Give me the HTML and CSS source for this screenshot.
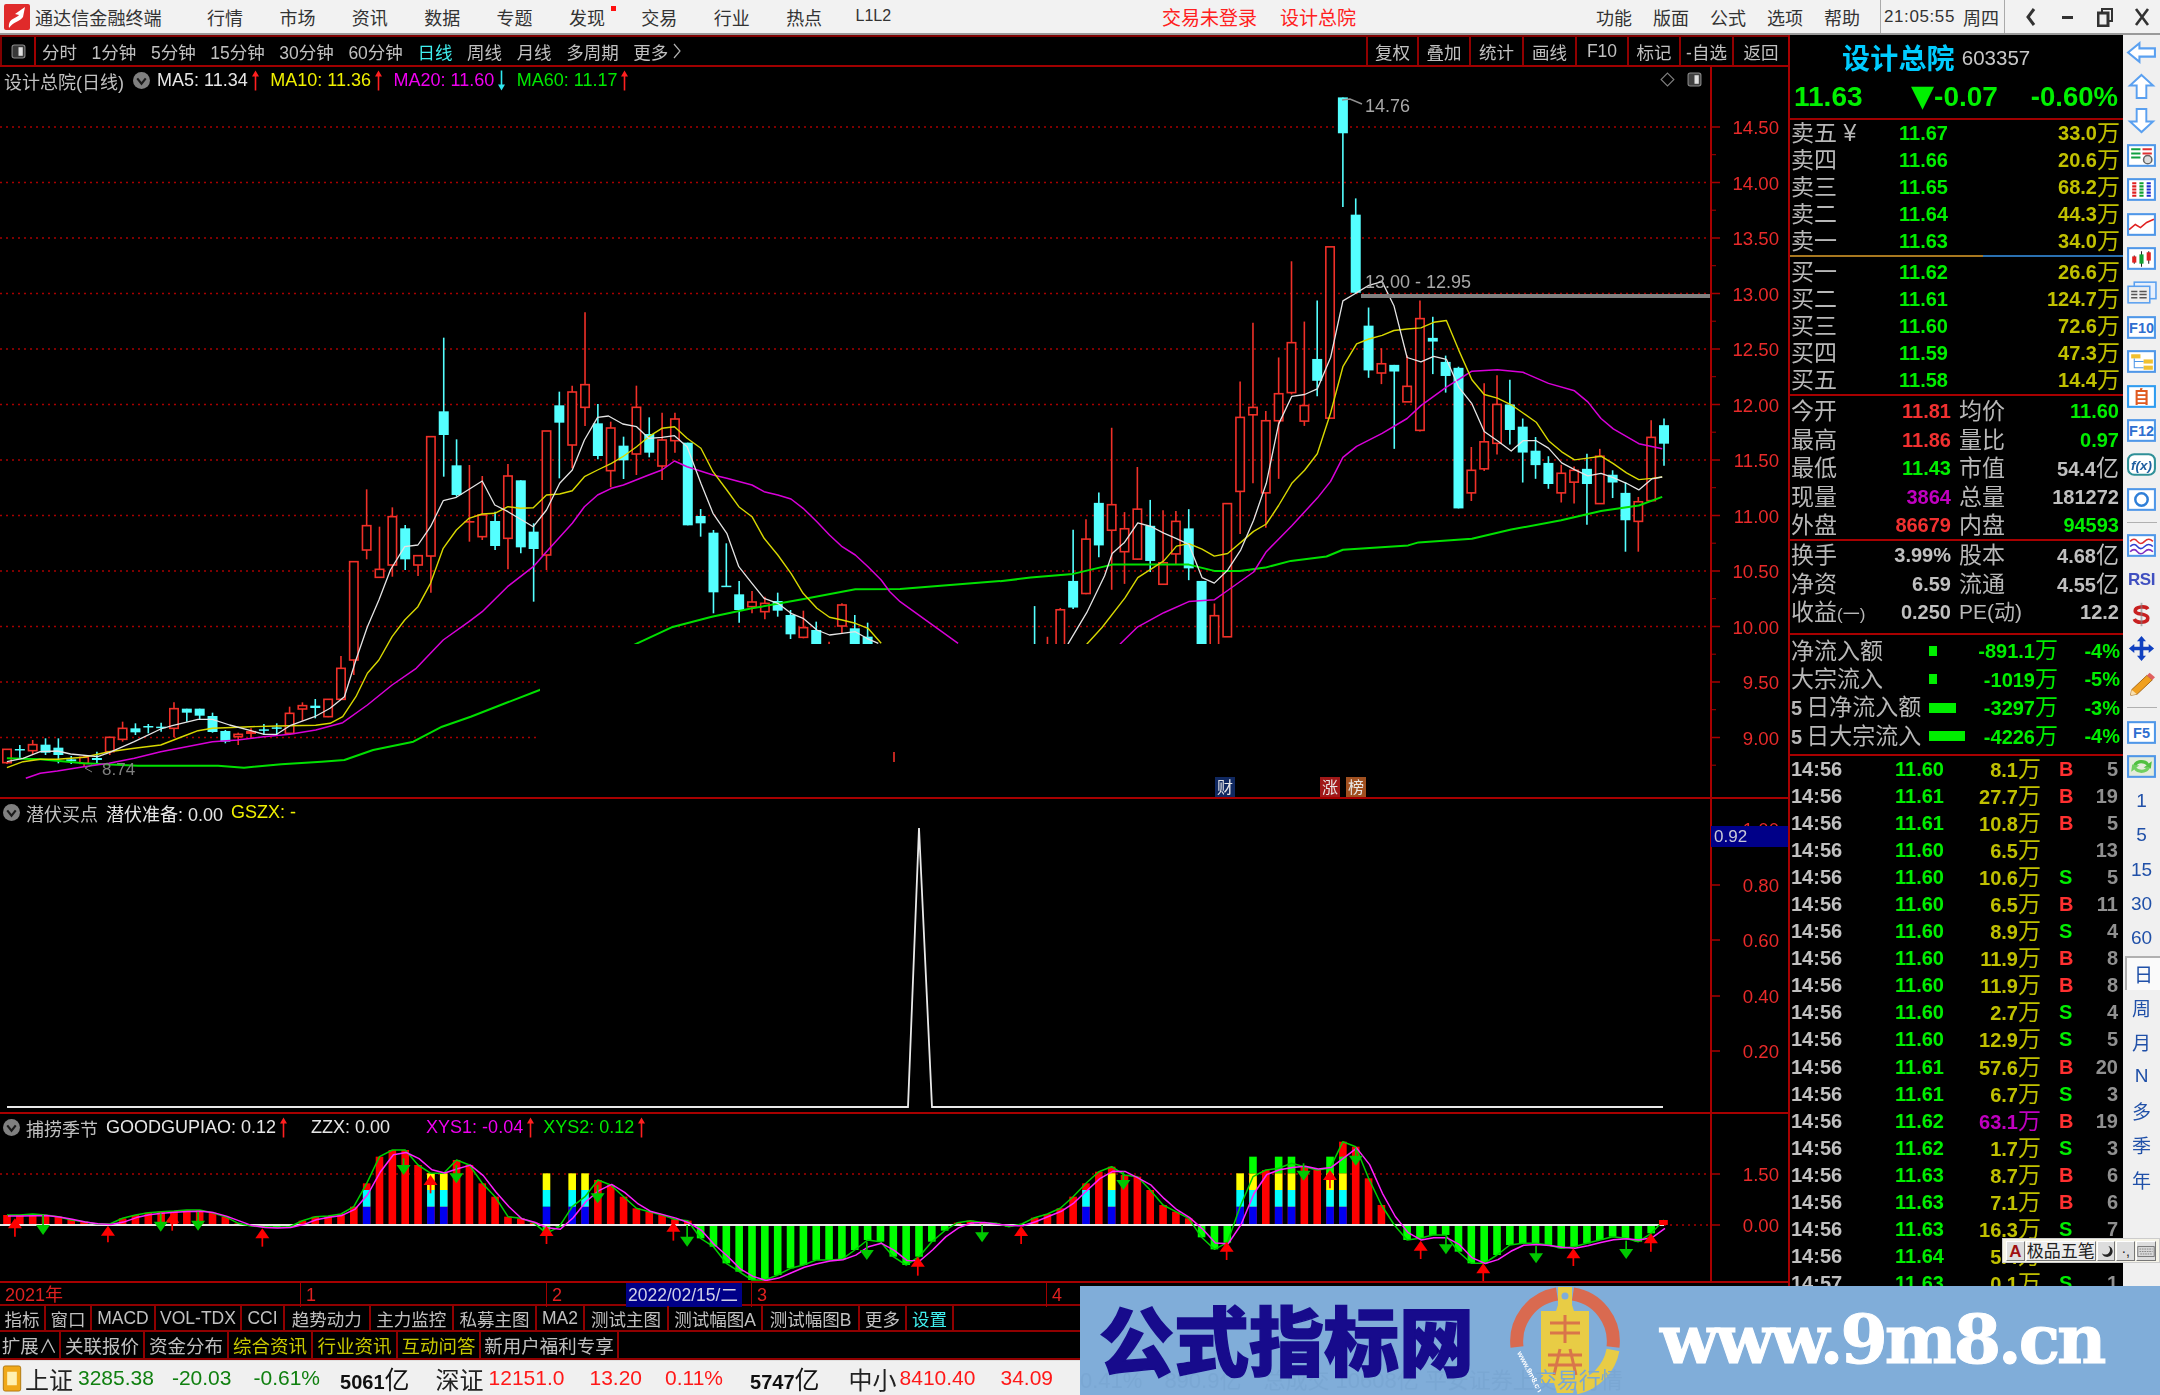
FILE: index.html
```html
<!DOCTYPE html>
<html lang="zh-CN">
<head>
<meta charset="utf-8">
<title>通达信金融终端</title>
<link rel="stylesheet" href="styles.css">
</head>
<body>
<svg class="defs" width="0" height="0" aria-hidden="true">
  <symbol id="ar-up" viewBox="0 0 9 20"><path d="M4.5 0 L8 6 H5.3 V20 H3.7 V6 H1 Z" fill="#ff2020"/></symbol>
  <symbol id="ar-down" viewBox="0 0 9 20"><path d="M3.7 0 H5.3 V14 H8 L4.5 20 L1 14 H3.7 Z" fill="#30e8f0"/></symbol>
  <symbol id="chev" viewBox="0 0 16 16"><circle cx="8" cy="8" r="8" fill="#808080"/><path d="M4 6 L8 11 L12 6" fill="none" stroke="#1a1a1a" stroke-width="2"/></symbol>
</svg>
<div class="app">
  <header class="titlebar">
    <svg class="logo" viewBox="0 0 26 26"><rect width="26" height="26" rx="2" fill="#e02a2a"/><path d="M5 24 C4 14 12 15 15 11 L11 10 L21 3 L19 13 C16 18 10 17 5 24Z" fill="#fff"/></svg>
    <span class="appname">通达信金融终端</span>
    <nav class="menu">
      <span>行情</span><span>市场</span><span>资讯</span><span>数据</span><span>专题</span><span class="dot">发现</span><span>交易</span><span>行业</span><span>热点</span><span class="lvl">L1L2</span>
    </nav>
    <span class="login">交易未登录</span><span class="stockname">设计总院</span>
    <nav class="menu2"><span>功能</span><span>版面</span><span>公式</span><span>选项</span><span>帮助</span></nav>
    <div class="clock"><span class="time">21:05:55</span><span>周四</span></div>
    <div class="winctl">
      <svg viewBox="0 0 14 20"><path d="M10 2 L4 10 L10 18" fill="none" stroke="#333" stroke-width="3"/></svg>
      <svg viewBox="0 0 14 20"><rect x="1" y="9" width="11" height="3" fill="#333"/></svg>
      <svg viewBox="0 0 16 20"><rect x="5" y="2" width="10" height="12" fill="none" stroke="#333" stroke-width="2"/><rect x="1" y="6" width="10" height="13" fill="#f0f0f0" stroke="#333" stroke-width="3"/></svg>
      <svg viewBox="0 0 16 20"><path d="M2 2 L14 18 M14 2 L2 18" stroke="#333" stroke-width="2.6"/></svg>
    </div>
  </header>

  <div class="main">
    <section class="left">
      <div class="toolbar">
        <div class="panelbtn"><svg viewBox="0 0 14 14"><rect x="1" y="1" width="12" height="12" rx="2" fill="#383838" stroke="#8a8a8a"/><rect x="7" y="3" width="4" height="8" fill="#e0e0e0"/></svg></div>
        <div class="periods">
          <span>分时</span><span>1分钟</span><span>5分钟</span><span>15分钟</span><span>30分钟</span><span>60分钟</span><span class="on">日线</span><span>周线</span><span>月线</span><span>多周期</span><span class="more">更多<svg viewBox="0 0 8 16"><path d="M1 1 L7 8 L1 15" fill="none" stroke="#b0b0b0" stroke-width="1.2"/></svg></span>
        </div>
        <div class="actions"><span>复权</span><span>叠加</span><span>统计</span><span>画线</span><span>F10</span><span>标记</span><span>-自选</span><span>返回</span></div>
      </div>

      <div class="chartbox">
        <svg id="plot" class="plot" viewBox="0 67 1788 1216"></svg>
        <div class="pane pane1">
          <div class="legend">
            <span class="lname">设计总院(日线)</span>
            <svg class="chev"><use href="#chev"/></svg>
            <span class="w mleft">MA5: 11.34</span><svg class="ar"><use href="#ar-up"/></svg>
            <span class="y mleft">MA10: 11.36</span><svg class="ar"><use href="#ar-up"/></svg>
            <span class="m mleft">MA20: 11.60</span><svg class="ar"><use href="#ar-down"/></svg>
            <span class="g mleft">MA60: 11.17</span><svg class="ar"><use href="#ar-up"/></svg>
          </div>
          <div class="cornericons">
            <svg viewBox="0 0 14 14"><path d="M7 1 L13 7 L7 13 L1 7Z" fill="none" stroke="#808080"/></svg>
            <svg viewBox="0 0 14 14"><rect x="1" y="1" width="12" height="12" rx="2" fill="#404040" stroke="#8a8a8a"/><rect x="7" y="3" width="4" height="8" fill="#e0e0e0"/></svg>
          </div>
        </div>
        <div class="pane pane2">
          <div class="legend">
            <svg class="chev first"><use href="#chev"/></svg>
            <span class="lname">潜伏买点</span>
            <span class="w mleft2">潜伏准备: 0.00</span>
            <span class="y mleft2">GSZX: -</span>
          </div>
        </div>
        <div class="pane pane3">
          <div class="legend">
            <svg class="chev first"><use href="#chev"/></svg>
            <span class="lname">捕捞季节</span>
            <span class="w mleft2">GOODGUPIAO: 0.12</span><svg class="ar"><use href="#ar-up"/></svg>
            <span class="w gapz">ZZX: 0.00</span>
            <span class="m gapy">XYS1: -0.04</span><svg class="ar"><use href="#ar-up"/></svg>
            <span class="g gapx">XYS2: 0.12</span><svg class="ar"><use href="#ar-up"/></svg>
          </div>
        </div>
      </div>

      <div class="timeaxis">
        <span>2021年</span><span>1</span><span>2</span><span class="cursor">2022/02/15/二</span><span class="after">3</span><span>4</span>
      </div>
      <div class="tabs tabs1">
        <span>指标</span><span>窗口</span><span>MACD</span><span>VOL-TDX</span><span>CCI</span><span>趋势动力</span><span>主力监控</span><span>私募主图</span><span>MA2</span><span>测试主图</span><span>测试幅图A</span><span>测试幅图B</span><span>更多</span><span class="cy">设置</span>
      </div>
      <div class="tabs tabs2">
        <span>扩展∧</span><span>关联报价</span><span>资金分布</span><span class="yl">综合资讯</span><span class="yl">行业资讯</span><span class="yl">互动问答</span><span>新用户福利专享</span>
      </div>
    </section>

    <aside class="panel">
      <div class="p-head"><span class="p-name">设计总院</span><span class="p-code">603357</span></div>
      <div class="p-price"><span>11.63</span><span><span class="tri">▼</span>-0.07</span><span class="p-pct">-0.60%</span></div>

      <div class="depth">
        <div class="d"><span class="l">卖五 ¥</span><b>11.67</b><b class="v">33.0<i>万</i></b></div>
        <div class="d"><span class="l">卖四</span><b>11.66</b><b class="v">20.6<i>万</i></b></div>
        <div class="d"><span class="l">卖三</span><b>11.65</b><b class="v">68.2<i>万</i></b></div>
        <div class="d"><span class="l">卖二</span><b>11.64</b><b class="v">44.3<i>万</i></b></div>
        <div class="d"><span class="l">卖一</span><b>11.63</b><b class="v">34.0<i>万</i></b></div>
      </div>
      <div class="midline"></div>
      <div class="depth bid">
        <div class="d"><span class="l">买一</span><b>11.62</b><b class="v">26.6<i>万</i></b></div>
        <div class="d"><span class="l">买二</span><b>11.61</b><b class="v">124.7<i>万</i></b></div>
        <div class="d"><span class="l">买三</span><b>11.60</b><b class="v">72.6<i>万</i></b></div>
        <div class="d"><span class="l">买四</span><b>11.59</b><b class="v">47.3<i>万</i></b></div>
        <div class="d"><span class="l">买五</span><b>11.58</b><b class="v">14.4<i>万</i></b></div>
      </div>

      <div class="stats s1">
        <div class="s"><span>今开</span><b class="r">11.81</b><span>均价</span><b class="gn">11.60</b></div>
        <div class="s"><span>最高</span><b class="r">11.86</b><span>量比</span><b class="gn">0.97</b></div>
        <div class="s"><span>最低</span><b class="gn">11.43</b><span>市值</span><b>54.4<i>亿</i></b></div>
        <div class="s"><span>现量</span><b class="pu">3864</b><span>总量</span><b>181272</b></div>
        <div class="s"><span>外盘</span><b class="r">86679</b><span>内盘</span><b class="gn">94593</b></div>
      </div>
      <div class="stats s2">
        <div class="s"><span>换手</span><b>3.99%</b><span>股本</span><b>4.68<i>亿</i></b></div>
        <div class="s"><span>净资</span><b>6.59</b><span>流通</span><b>4.55<i>亿</i></b></div>
        <div class="s"><span>收益<small>(一)</small></span><b>0.250</b><span class="pe">PE(动)</span><b>12.2</b></div>
      </div>
      <div class="flows">
        <div class="f"><span>净流入额</span><em class="bar" style="width:8px"></em><b>-891.1<i>万</i></b><b>-4%</b></div>
        <div class="f"><span>大宗流入</span><em class="bar" style="width:8px"></em><b>-1019<i>万</i></b><b>-5%</b></div>
        <div class="f"><span><u>5</u>日净流入额</span><em class="bar" style="width:27px"></em><b>-3297<i>万</i></b><b>-3%</b></div>
        <div class="f"><span><u>5</u>日大宗流入</span><em class="bar" style="width:36px"></em><b>-4226<i>万</i></b><b>-4%</b></div>
      </div>

      <div class="ticks">
        <div class="t"><b>14:56</b><b class="gn">11.60</b><b class="yv">8.1<i>万</i></b><b class="rd">B</b><b class="ct">5</b></div>
        <div class="t"><b>14:56</b><b class="gn">11.61</b><b class="yv">27.7<i>万</i></b><b class="rd">B</b><b class="ct">19</b></div>
        <div class="t"><b>14:56</b><b class="gn">11.61</b><b class="yv">10.8<i>万</i></b><b class="rd">B</b><b class="ct">5</b></div>
        <div class="t"><b>14:56</b><b class="gn">11.60</b><b class="yv">6.5<i>万</i></b><b></b><b class="ct">13</b></div>
        <div class="t"><b>14:56</b><b class="gn">11.60</b><b class="yv">10.6<i>万</i></b><b class="gn">S</b><b class="ct">5</b></div>
        <div class="t"><b>14:56</b><b class="gn">11.60</b><b class="yv">6.5<i>万</i></b><b class="rd">B</b><b class="ct">11</b></div>
        <div class="t"><b>14:56</b><b class="gn">11.60</b><b class="yv">8.9<i>万</i></b><b class="gn">S</b><b class="ct">4</b></div>
        <div class="t"><b>14:56</b><b class="gn">11.60</b><b class="yv">11.9<i>万</i></b><b class="rd">B</b><b class="ct">8</b></div>
        <div class="t"><b>14:56</b><b class="gn">11.60</b><b class="yv">11.9<i>万</i></b><b class="rd">B</b><b class="ct">8</b></div>
        <div class="t"><b>14:56</b><b class="gn">11.60</b><b class="yv">2.7<i>万</i></b><b class="gn">S</b><b class="ct">4</b></div>
        <div class="t"><b>14:56</b><b class="gn">11.60</b><b class="yv">12.9<i>万</i></b><b class="gn">S</b><b class="ct">5</b></div>
        <div class="t"><b>14:56</b><b class="gn">11.61</b><b class="yv">57.6<i>万</i></b><b class="rd">B</b><b class="ct">20</b></div>
        <div class="t"><b>14:56</b><b class="gn">11.61</b><b class="yv">6.7<i>万</i></b><b class="gn">S</b><b class="ct">3</b></div>
        <div class="t"><b>14:56</b><b class="gn">11.62</b><b class="yv big">63.1<i>万</i></b><b class="rd">B</b><b class="ct">19</b></div>
        <div class="t"><b>14:56</b><b class="gn">11.62</b><b class="yv">1.7<i>万</i></b><b class="gn">S</b><b class="ct">3</b></div>
        <div class="t"><b>14:56</b><b class="gn">11.63</b><b class="yv">8.7<i>万</i></b><b class="rd">B</b><b class="ct">6</b></div>
        <div class="t"><b>14:56</b><b class="gn">11.63</b><b class="yv">7.1<i>万</i></b><b class="rd">B</b><b class="ct">6</b></div>
        <div class="t"><b>14:56</b><b class="gn">11.63</b><b class="yv">16.3<i>万</i></b><b class="gn">S</b><b class="ct">7</b></div>
        <div class="t"><b>14:56</b><b class="gn">11.64</b><b class="yv">5.4<i>万</i></b><b class="rd">B</b><b class="ct">3</b></div>
        <div class="t"><b>14:57</b><b class="gn">11.63</b><b class="yv">0.1<i>万</i></b><b class="gn">S</b><b class="ct">1</b></div>
      </div>
    </aside>

    <aside class="side">
      <div class="ic"><svg viewBox="0 0 30 24"><path d="M2 12 L13 3 V8 H28 V16 H13 V21 Z" fill="#fff" stroke="#5aa0f0" stroke-width="2"/></svg></div>
      <div class="ic"><svg viewBox="0 0 30 28"><path d="M15 2 L27 13 H20 V26 H10 V13 H3 Z" fill="#fff" stroke="#5aa0f0" stroke-width="2"/></svg></div>
      <div class="ic"><svg viewBox="0 0 30 28"><path d="M10 2 H20 V15 H27 L15 26 L3 15 H10 Z" fill="#fff" stroke="#5aa0f0" stroke-width="2"/></svg></div>
      <div class="ic"><svg viewBox="0 0 30 24"><rect x="2" y="2" width="26" height="20" fill="#fff" stroke="#4f97e8" stroke-width="2"/><path d="M5 6H14M5 10H14M5 14H14" stroke="#10a040" stroke-width="2"/><path d="M16 6H25M16 10H25" stroke="#e03030" stroke-width="2"/><circle cx="21" cy="16" r="4" fill="#ddd" stroke="#666" stroke-width="1.5"/></svg></div>
      <div class="ic"><svg viewBox="0 0 30 24"><rect x="2" y="2" width="26" height="20" fill="#fff" stroke="#4f97e8" stroke-width="2"/><path d="M8 5V19" stroke="#e02020" stroke-width="4" stroke-dasharray="2 1"/><path d="M15 5V19" stroke="#10a030" stroke-width="4" stroke-dasharray="2 1"/><path d="M22 5V19" stroke="#2030d0" stroke-width="4" stroke-dasharray="2 1"/></svg></div>
      <div class="ic"><svg viewBox="0 0 30 24"><rect x="2" y="2" width="26" height="20" fill="#fff" stroke="#4f97e8" stroke-width="2"/><path d="M3 17 L9 12 L14 15 L20 10 L27 7" fill="none" stroke="#e02020" stroke-width="1.5"/></svg></div>
      <div class="ic"><svg viewBox="0 0 30 24"><rect x="2" y="2" width="26" height="20" fill="#fff" stroke="#4f97e8" stroke-width="2"/><path d="M8 9V17M15 5V20M22 5V17" stroke="#222"/><rect x="6" y="10" width="4" height="6" fill="#e02020"/><rect x="13" y="8" width="4" height="9" fill="#10a030"/><rect x="20" y="6" width="4" height="8" fill="#e02020"/></svg></div>
      <div class="ic"><svg viewBox="0 0 30 24"><rect x="8" y="2" width="21" height="16" fill="#e8f0fc" stroke="#5aa0f0" stroke-width="1.5"/><rect x="2" y="6" width="21" height="16" fill="#eee" stroke="#5aa0f0" stroke-width="1.5"/><path d="M5 11H11M13 11H20M5 14H11M13 14H20M5 17H11M13 17H20" stroke="#555" stroke-width="1.5"/></svg></div>
      <div class="ic"><svg viewBox="0 0 30 24"><rect x="2" y="2" width="26" height="20" fill="#fff" stroke="#4f97e8" stroke-width="2"/><text x="15" y="17" class="icontext">F10</text></svg></div>
      <div class="ic"><svg viewBox="0 0 30 24"><rect x="2" y="2" width="26" height="20" fill="#fff" stroke="#4f97e8" stroke-width="2"/><rect x="5" y="5" width="9" height="4" fill="#f0c030"/><rect x="17" y="10" width="9" height="4" fill="#f0c030"/><rect x="17" y="16" width="9" height="4" fill="#f0c030"/><path d="M8 9V18H17M8 12H17" fill="none" stroke="#4f97e8"/></svg></div>
      <div class="ic"><svg viewBox="0 0 30 24"><rect x="2" y="2" width="26" height="20" fill="#fff" stroke="#2f9cf0" stroke-width="2"/><text x="15" y="18" class="icontext orange">自</text></svg></div>
      <div class="ic"><svg viewBox="0 0 30 24"><rect x="2" y="2" width="26" height="20" fill="#fff" stroke="#4f97e8" stroke-width="2"/><text x="15" y="17" class="icontext">F12</text></svg></div>
      <div class="ic"><svg viewBox="0 0 30 24"><rect x="2" y="2" width="26" height="20" rx="6" fill="#fff" stroke="#2f9098" stroke-width="2"/><text x="15" y="17" class="icontext fx">f(x)</text></svg></div>
      <div class="ic"><svg viewBox="0 0 30 24"><rect x="2" y="2" width="26" height="20" fill="#fff" stroke="#4f97e8" stroke-width="2"/><circle cx="15" cy="12" r="6" fill="none" stroke="#2f7fd8" stroke-width="2.4"/></svg></div>
      <div class="sep"></div>
      <div class="ic"><svg viewBox="0 0 30 24"><rect x="2" y="2" width="26" height="20" fill="#fff" stroke="#4f97e8" stroke-width="2"/><path d="M4 8 Q8 4 11 8 T18 8 T26 8" fill="none" stroke="#e03030" stroke-width="1.5"/><path d="M4 13 Q8 9 11 13 T18 13 T26 13" fill="none" stroke="#3040d0" stroke-width="1.5"/><path d="M4 18 Q8 14 11 18 T18 18 T26 18" fill="none" stroke="#8030c0" stroke-width="1.5"/></svg></div>
      <div class="ic txt rsi">RSI</div>
      <div class="ic"><svg viewBox="0 0 30 30"><path d="M22 9 C20 5 8 6 8 11 C8 16 22 13 22 19 C22 25 9 25 7 20" fill="none" stroke="#c82020" stroke-width="4"/><path d="M15 2V28" stroke="#808080" stroke-width="2" opacity=".6"/></svg></div>
      <div class="ic"><svg viewBox="0 0 30 30"><path d="M15 1 L20 7 H17 V13 H23 V10 L29 15 L23 20 V17 H17 V23 H20 L15 29 L10 23 H13 V17 H7 V20 L1 15 L7 10 V13 H13 V7 H10 Z" fill="#1040c0"/></svg></div>
      <div class="ic"><svg viewBox="0 0 30 30"><path d="M4 22 L21 6 L27 11 L10 27 L3 28 Z" fill="#f0a020" stroke="#a06010"/><path d="M21 6 L24 3 L30 8 L27 11Z" fill="#e06060"/><path d="M4 22 L3 28 L10 27Z" fill="#f8e0b0"/></svg></div>
      <div class="sep sep2"></div>
      <div class="ic"><svg viewBox="0 0 30 24"><rect x="2" y="2" width="26" height="20" fill="#fff" stroke="#4f97e8" stroke-width="2"/><text x="15" y="17" class="icontext">F5</text></svg></div>
      <div class="ic"><svg viewBox="0 0 30 24"><rect x="2" y="2" width="26" height="20" fill="#e4ecdc" stroke="#4f97e8" stroke-width="2"/><path d="M7 11 C8 5 19 4 22 9 L25 7 L24 14 L17 13 L20 11 C17 8 11 8 10 12Z" fill="#50c040"/><path d="M23 13 C22 19 11 20 8 15 L5 17 L6 10 L13 11 L10 13 C13 16 19 16 20 12Z" fill="#70d060"/></svg></div>
      <div class="ic txt">1</div>
      <div class="ic txt">5</div>
      <div class="ic txt">15</div>
      <div class="ic txt">30</div>
      <div class="ic txt">60</div>
      <div class="ic txt sel">日</div>
      <div class="ic txt">周</div>
      <div class="ic txt">月</div>
      <div class="ic txt">N</div>
      <div class="ic txt">多</div>
      <div class="ic txt">季</div>
      <div class="ic txt">年</div>
    </aside>
  </div>

  <footer class="status">
    <svg class="stico" viewBox="0 0 20 28"><rect x="1" y="1" width="18" height="26" rx="2" fill="#f0a818" stroke="#b07810"/><rect x="5" y="7" width="10" height="14" fill="#fff0b0"/></svg>
    <span class="sn">上证</span><span class="nv gr g5">3285.38</span><span class="nv gr g18">-20.03</span><span class="nv gr g22">-0.61%</span><span class="nv bk g20">5061<i>亿</i></span>
    <span class="sn g26">深证</span><span class="nv rd2 g5">12151.0</span><span class="nv rd2 g25">13.20</span><span class="nv rd2 g23">0.11%</span><span class="nv bk g27">5747<i>亿</i></span>
    <span class="sn g29">中小</span><span class="nv rd2 g3">8410.40</span><span class="nv rd2 g25">34.09</span>
  </footer>

  <div class="ime">
    <span class="imebtn imea">A</span><span class="imebtn imename">极品五笔</span>
    <span class="imebtn"><svg viewBox="0 0 14 14"><path d="M9 1 A6 6 0 1 1 2 9 A5 5 0 0 0 9 1Z" fill="#222"/></svg></span>
    <span class="imebtn">·,</span>
    <span class="imebtn imekb"><svg viewBox="0 0 22 14"><rect x="1" y="1" width="20" height="12" fill="#d8d8d8" stroke="#666"/><path d="M3 4H19M3 7H19M4 10H18" stroke="#777" stroke-dasharray="2 1"/></svg></span>
  </div>

  <div class="strip">
    <span class="faint f1">0.41%　890.9亿　总成交 10608亿 平安证券上交易行情</span>
    <span class="cnmark">公式指标网</span>
    <svg class="mark" viewBox="0 0 110 108">
      <path d="M7 60 A48 48 0 0 1 47 7" fill="none" stroke="#d96a50" stroke-width="13"/>
      <path d="M63 7 A48 48 0 0 1 103 60" fill="none" stroke="#d96a50" stroke-width="13"/>
      <path d="M103 63 A48 48 0 0 1 66 101" fill="none" stroke="#e8cc45" stroke-width="13"/>
      <path d="M48 0 H62 V18 L64 24 H79 V96 H66 L63 106 H47 L44 96 H31 V24 H46 L48 18Z" fill="#e8cc45"/>
      <circle cx="55" cy="9" r="3.5" fill="#7fadd9"/>
      <path d="M40 36 H70 M40 46 H70 M55 28 V56 M38 68 H72 M38 78 H72 M50 62 L44 88 M60 62 L66 88" fill="none" stroke="#d9754a" stroke-width="3"/>
      <text class="marktxt" transform="translate(7 66) rotate(62)">www.9m8.cn</text>
    </svg>
    <span class="urlmark">www.9m8.cn</span>
  </div>
</div>
<script src="chart.js"></script>
</body>
</html>
```
FILE: styles.css
```css
*{box-sizing:border-box}
html,body{margin:0;padding:0;background:#000}
body{width:2160px;height:1395px;overflow:hidden;font-family:"Liberation Sans","Noto Sans CJK SC",sans-serif;color:#c0c0c0}
.defs{position:absolute}
i{font-style:normal}
.app{position:relative;width:2160px;height:1395px;display:flex;flex-direction:column;filter:blur(.4px)}

/* title bar */
.titlebar{height:35px;background:#f2f2f2;border-bottom:2px solid #9a9a9a;display:flex;align-items:center;color:#333;font-size:18px;flex:none}
.logo{width:26px;height:26px;margin-left:4px}
.appname{margin-left:5px;width:127px;white-space:nowrap;font-size:18.1px}
.menu{display:flex;margin-left:45px;gap:36.4px;width:685px}
.menu span{white-space:nowrap}
.dot{position:relative}
.dot::after{content:"";position:absolute;left:42px;top:2px;width:5px;height:5px;background:#ff1010}
.lvl{font-size:16px;line-height:24px;margin-left:-3px}
.login{margin-left:270px;color:#ff2020;width:97px;white-space:nowrap;font-size:19px}
.stockname{margin-left:21px;color:#ff2020;width:77px;white-space:nowrap;font-size:19px}
.menu2{display:flex;gap:21px;margin-left:239px}
.clock{display:flex;gap:8px;align-items:center;margin-left:20px;padding:0 5px 0 3px;height:33px;border-left:1px solid #aaa;border-right:1px solid #aaa;font-size:18px;white-space:nowrap}
.time{font-size:17px;letter-spacing:.6px}
.winctl{display:flex;gap:21px;margin-left:18px;align-items:center}
.winctl svg{width:16px;height:20px}

/* main */
.main{display:flex;height:1325px;flex:none}
.left{width:1788px;flex:none;display:flex;flex-direction:column}
.toolbar{height:32px;border-top:2px solid #800000;border-bottom:2px solid #a00000;display:flex;align-items:stretch;font-size:17.5px;flex:none}
.panelbtn{width:36px;border-left:2px solid #800000;border-right:2px solid #a00000;display:flex;align-items:center;justify-content:center}
.panelbtn svg{width:15px;height:15px}
.periods{display:flex;gap:14.6px;padding-left:6px;align-items:center;white-space:nowrap}
.more{display:flex;align-items:center;gap:5px}
.more svg{width:8px;height:16px}
.on{color:#40f0f0}
.actions{margin-left:auto;display:grid;grid-template-columns:51px 52px 53px 53px 52px 52px 53px 56px;width:422px}
.actions span{border-left:2px solid #900000;display:flex;align-items:center;justify-content:center;white-space:nowrap}

.chartbox{position:relative;height:1216px;flex:none;display:flex;flex-direction:column}
.plot{position:absolute;left:0;top:0;width:1788px;height:1216px}
.pane{position:relative;border-bottom:2px solid #a80000;flex:none}
.pane1{height:732px}
.pane2{height:315px}
.pane3{height:169px}
.legend{display:flex;align-items:center;height:24px;padding:3px 0 0 4px;font-size:18px;white-space:nowrap;position:relative}
.lname{color:#c0c0c0}
.pane2 .legend,.pane3 .legend{padding-left:3px}
.chev{width:17px;height:17px;margin-left:9px}
.chev.first{margin-left:0;margin-right:6px}
.ar{width:9px;height:21px;margin-left:3px}
.mleft{margin-left:10.5px}
.chev + .mleft{margin-left:7px}
.mleft2{margin-left:8px}
.gapz{margin-left:23px}
.gapy{margin-left:36px}
.gapx{margin-left:8px}
.w{color:#e6e6e6}
.y{color:#f0f000}
.m{color:#f000f0}
.g{color:#00e800}
.cornericons{position:absolute;left:1660px;top:5px;display:flex;gap:12px}
.cornericons svg{width:15px;height:15px}

.timeaxis{height:23px;display:grid;grid-template-columns:300px 246px 80px 116px 9px 295px 1fr;font-size:18px;color:#e02020;border-bottom:2px solid #900000;flex:none;white-space:nowrap}
.timeaxis span{padding-left:5px;border-left:1px solid #a00000;line-height:24px}
.timeaxis span:first-child{border-left:0}
.timeaxis .cursor{background:#000088;color:#d0d0e8;padding-left:2px;border:0;font-size:17.5px}
.timeaxis .after{grid-column:6}
.tabs{display:grid;font-size:17.5px;flex:none;white-space:nowrap;align-items:stretch}
.tabs span{display:flex;align-items:center;justify-content:center;border-right:2px solid #900000}
.tabs1{height:26px;grid-template-columns:46px 46px 64px 86px 43px 85.5px 83.5px 83px 48px 84px 94px 97px 47px 47px;border-bottom:2px solid #900000}
.tabs2{height:28px;grid-template-columns:61px 84px 84px 84px 85px 83px 138px;border-bottom:2px solid #900000;font-size:18.5px}
.cy{color:#40f0f0}
.yl{color:#c8c800}

/* right panel */
.panel{width:335px;flex:none;border-left:2px solid #a80000;overflow:hidden;font-size:23px;position:relative}
.panel b{font-weight:700;font-size:20px}
.p-head{height:40px;padding:3px 0 0 52px;display:flex;align-items:center;gap:7px;white-space:nowrap}
.p-name{color:#00ccff;font-size:28px;font-weight:700;letter-spacing:.2px}
.p-code{font-size:20.5px;color:#c8c8c8;margin-top:3px}
.p-price{height:45px;border-bottom:2px solid #a00000;display:grid;grid-template-columns:117px 112px 1fr;align-items:center;padding:0 5px 0 4px;color:#00f000;font-size:28px;font-weight:700;white-space:nowrap}
.p-pct{text-align:right;font-size:27.5px}
.tri{font-family:"DejaVu Sans",sans-serif;font-size:30px;line-height:1}
.depth{height:135px}
.d{display:grid;grid-template-columns:108px 60px 1fr;height:27px;line-height:27px;padding:0 3px 0 1px;color:#b8b8b8}
.d .l{white-space:nowrap}
.d b{color:#00ee00}
.d b.v{color:#c0c000;text-align:right;display:flex;justify-content:flex-end;align-items:center}
.d i,.yv i{font-size:23px;font-weight:400}
.midline{height:2px;background:linear-gradient(90deg,#a87820 0 193px,#2a70b0 193px)}
.depth.bid{height:139px;padding-top:2px;border-bottom:2px solid #a80000}
.stats{border-bottom:2px solid #a80000}
.stats.s1{padding-top:1px;height:145px}
.stats.s2{height:94px}
.s{display:grid;grid-template-columns:100px 60px 8px 82px 78px;height:28.5px;line-height:28.5px;padding-left:1px;color:#b8b8b8;white-space:nowrap}
.s > b{text-align:right;color:#c0c0c0}
.s > span:nth-of-type(2){grid-column:4}
.s i{font-size:23px;font-weight:400}
.s small{font-size:17px}
.s .pe{font-size:21px}
.s b.r{color:#f03030}
.s b.gn{color:#00ee00}
.s b.pu{color:#c000c0}
.flows{height:121px;border-bottom:2px solid #a80000;padding:1px 3px 0 1px}
.f{display:grid;grid-template-columns:138px 36px 1fr 62px;height:28.5px;line-height:28.5px;align-items:center;white-space:nowrap;color:#b8b8b8}
.f u{text-decoration:none;font-weight:700;font-size:20px;margin-right:4px}
.f em{display:block;height:10px;background:#00ee00}
.f > b{text-align:right;color:#00ee00}
.f i{font-size:23px;font-weight:400}
.t{display:grid;grid-template-columns:104px 52px 94px 18px 59px;height:27.05px;line-height:27.05px;padding-left:1px;white-space:nowrap;color:#c0c0c0}
.t b{font-size:20px}
.t b.gn{color:#00ee00}
.t .yv{color:#c0c000;text-align:right}
.t .big{color:#c000c0}
.t .rd{color:#ff3030;padding-left:18px;margin-right:-18px}
.t b.gn:nth-child(4){padding-left:18px;margin-right:-18px}
.t .ct{text-align:right;color:#909090}

/* right icon strip */
.side{width:37px;flex:none;background:#f0f0f0;color:#2050a8}
.ic{height:34.4px;display:flex;align-items:center;justify-content:center}
.ic svg{width:31px;height:27px}
.sep{height:12px;display:flex;align-items:center}
.sep2{height:14.5px}
.sep::after{content:"";display:block;width:30px;margin:0 auto;height:1px;background:#b0b0b0}
.txt{font-size:19px;font-family:"Liberation Sans","Noto Sans CJK SC",sans-serif}
.rsi{color:#4050c0;font-weight:700;font-size:17px;letter-spacing:-.5px}
.sel{background:#fafafa;border-left:2px solid #b0b0b0;border-top:2px solid #b0b0b0;margin-left:2px}
.icontext{font:700 14px "Liberation Sans",sans-serif;fill:#2f6fd0;text-anchor:middle}
.icontext.orange{font:700 16px "Noto Sans CJK SC",sans-serif;fill:#e05a20}
.icontext.fx{fill:#205fa0;font-size:13px;font-style:italic}

/* status bar */
.status{height:35px;flex:none;background:#f0f0f0;display:flex;align-items:center;color:#222;white-space:nowrap;border-top:1px solid #e0e0e0}
.stico{width:20px;height:27px;margin-left:2px}
.sn{font-size:24px;margin-left:3px}
.nv{font-size:21px}
.nv i{font-size:25px;font-weight:400}
.gr{color:#108010}
.rd2{color:#ff1818}
.bk{color:#101010;font-weight:700;font-size:20px}
.g3{margin-left:3px}.g5{margin-left:5px}.g18{margin-left:18px}.g20{margin-left:20px}.g22{margin-left:22px}.g23{margin-left:23px}.g25{margin-left:25px}.g26{margin-left:26px}.g27{margin-left:27px}.g29{margin-left:29px}

/* floating input-method toolbar */
.ime{position:absolute;left:2002px;top:1238px;width:158px;height:25px;background:#f6f4e8;border:1px solid #ccc;display:flex;padding:2px 3px;gap:1px;color:#222}
.imebtn{background:#ddd;border:1px solid #777;border-top-color:#fff;border-left-color:#fff;height:20px;width:20px;display:flex;align-items:center;justify-content:center;font-size:14px;line-height:1}
.imebtn svg{width:13px;height:13px}
.imea{color:#a01010;font-weight:700;font-size:17px}
.imename{width:70px;font-size:17px;background:#ececec;white-space:nowrap}
.imebtn.imekb svg{width:18px;height:13px}

/* watermark strip */
.strip{position:absolute;left:1080px;top:1286px;width:1080px;height:109px;background:#80add9;display:flex;align-items:center;overflow:hidden}
.cnmark{margin-left:19px;width:380px;font:900 75px/1 "Noto Sans CJK SC",sans-serif;color:#170b8c;white-space:nowrap;position:relative;top:-3px;-webkit-text-stroke:1.5px #170b8c}
.mark{width:110px;height:108px;margin-left:31px;flex:none}
.marktxt{font:700 7.5px "Liberation Sans",sans-serif;fill:#fff}
.urlmark{margin-left:40px;font:700 68px/1 "DejaVu Serif",serif;color:#fff;letter-spacing:-3px;white-space:nowrap;position:relative;top:-2px;-webkit-text-stroke:1px #fff}
.faint{position:absolute;color:#7aa7d3;font-size:22px;white-space:nowrap}
.f1{left:0;top:76px}
```
FILE: chart.js
```js
(function () {
  var NS = 'http://www.w3.org/2000/svg';
  var svg = document.getElementById('plot');
  function el(tag, attrs, text) {
    var e = document.createElementNS(NS, tag);
    for (var k in attrs) e.setAttribute(k, attrs[k]);
    if (text !== undefined) e.textContent = text;
    svg.appendChild(e);
    return e;
  }
  var RED = '#f03028', CY = '#54ffff', DK = '#a80000';
  var cx = function (i) { return 7 + 12.845 * i; };
  var y7 = function (v) { return 300 + v / 3; };
  var y8 = function (v) { return 80 + v / 2.703; };

  // main pane grid
  for (var p = 14.5; p >= 9; p -= 0.5) {
    var gy = 127 + (14.5 - p) * 111;
    el('line', { x1: 0, x2: 1711, y1: gy, y2: gy, stroke: DK, 'stroke-width': 1.5, 'stroke-dasharray': '2 4' });
    el('line', { x1: 1711, x2: 1720, y1: gy, y2: gy, stroke: DK, 'stroke-width': 1.5 });
    el('line', { x1: 1711, x2: 1716, y1: gy + 27.7, y2: gy + 27.7, stroke: DK });
    el('text', { x: 1779, y: gy + 7, 'text-anchor': 'end', class: 'ax', fill: '#e82a2a', 'font-size': '18.6', 'font-family': 'Liberation Sans' }, p.toFixed(2));
  }
  el('line', { x1: 1711, x2: 1711, y1: 67, y2: 1283, stroke: DK, 'stroke-width': 2 });

  // candles [high, top, bottom, low, kind] (0 red, 1 cyan) from zoom-7 scale
  var left = [
    [1348,1348,1388,1392,0],[1335,1347,1350,1375,1],[1320,1334,1352,1365,0],[1315,1334,1358,1365,1],[1315,1343,1365,1390,1],
    [1368,1378,1384,1392,1],[1365,1372,1390,1400,0],[1355,1374,1380,1390,1],[1310,1312,1355,1365,0],[1265,1285,1318,1325,0],
    [1270,1285,1297,1305,1],[1272,1278,1280,1300,1],[1268,1280,1282,1295,1],[1207,1226,1285,1312,0],[1226,1226,1238,1265,1],
    [1226,1226,1247,1258,1],[1238,1248,1296,1298,1],[1290,1293,1325,1330,1],[1298,1303,1310,1335,0],[1285,1295,1298,1315,0],
    [1272,1288,1290,1305,1],[1270,1282,1286,1305,1],[1220,1240,1300,1305,0],[1207,1217,1227,1262,0],[1197,1217,1224,1255,1],
    [1197,1198,1250,1252,0],[1068,1105,1198,1200,0],[785,785,1080,1125,0],[568,677,750,778,0],[680,808,832,832,0],
    [622,650,795,830,0],[675,685,778,810,1],[767,767,795,828,0],[410,410,768,878,0],[113,334,405,530,1],
    [418,496,585,590,1],[495,663,668,725,2],[528,645,710,720,0],[635,663,738,750,1],[492,528,715,808,0],
    [541,541,742,760,1],[670,695,747,905,1],[393,393,765,810,0],[275,316,368,535,1],[257,276,435,505,0],
    [37,254,322,378,0],[312,370,468,478,1],[365,384,512,562,0],[410,437,481,537,1],[257,322,462,525,0],
    [352,402,458,472,1],[338,420,498,540,0],[338,357,422,458,0],[428,428,676,676,1],[627,648,670,710,1],
    [690,698,877,940,1],[730,857,859,860,1],[843,883,930,968,1],[873,906,920,940,0],[890,910,935,958,0],
    [878,903,932,950,1],[930,945,1003,1017,1],[932,983,1012,1015,0],[965,990,1100,1100,1],[1025,1045,1100,1100,0],
    [910,915,978,1000,0],[945,985,1100,1100,1],[968,1010,1100,1100,1]
  ];
  // index 80.. from zoom-8 scale
  var right = [
    [1422,1700,1800,1800,1],[1505,1600,1700,1700,0],[1427,1432,1700,1700,0],[1216,1354,1426,1430,1],[1187,1241,1388,1390,0],
    [1115,1143,1258,1290,1],[940,1148,1217,1378,0],[1168,1213,1275,1362,0],[1046,1160,1295,1297,0],[1135,1205,1300,1330,1],
    [1163,1305,1363,1365,0],[1165,1193,1281,1310,0],[1160,1212,1320,1352,1],[1354,1354,1700,1700,1],[1415,1448,1700,1700,0],
    [1145,1145,1505,1505,0],[815,912,1112,1227,0],[656,885,905,1090,0],[895,921,1116,1210,0],[750,848,921,1078,0],
    [490,710,845,850,0],[653,880,922,935,0],[596,754,813,855,1],[451,451,914,914,0],[47,47,144,343,1],
    [320,364,575,578,1],[615,664,785,805,1],[725,767,792,822,0],[770,770,788,997,1],[745,828,870,870,0],
    [596,645,947,950,0],[640,697,707,795,1],[745,762,800,845,1],[775,778,1158,1158,1],[992,1055,1116,1138,0],
    [820,978,1051,1057,0],[798,877,982,1012,0],[810,877,946,985,1],[915,937,1007,1088,1],[965,1002,1041,1078,1],
    [1017,1035,1092,1105,1],[1040,1063,1116,1142,0],[1045,1055,1087,1145,0],[1010,1051,1092,1202,1],[997,1017,1145,1146,0],
    [1055,1067,1088,1130,1],[1087,1116,1190,1275,1],[1127,1140,1193,1275,0],[920,966,1137,1140,0],[915,933,983,1043,1]
  ];
  function candle(i, c, fy) {
    var x = cx(i), kind = c[4], col = kind === 1 ? CY : RED;
    el('line', { x1: x, x2: x, y1: fy(c[0]), y2: fy(c[3]), stroke: col, 'stroke-width': 1.6 });
    var top = fy(c[1]), h = Math.max(fy(c[2]) - top, 1.5);
    if (kind === 1) el('rect', { x: x - 5, y: top, width: 10, height: h, fill: CY });
    else if (kind === 2) el('rect', { x: x - 5, y: top, width: 10, height: h, fill: RED });
    else el('rect', { x: x - 4.2, y: top, width: 8.4, height: h, fill: '#000', stroke: col, 'stroke-width': 1.6 });
  }
  left.forEach(function (c, i) { candle(i, c, y7); });
  right.forEach(function (c, i) { candle(i + 80, c, y8); });

  function pl(pts, col, w, xf, yf) {
    el('polyline', {
      fill: 'none', stroke: col, 'stroke-width': w, 'stroke-linejoin': 'round',
      points: pts.map(function (p) { return xf(p[0]).toFixed(1) + ',' + yf(p[1]).toFixed(1); }).join(' ')
    });
  }
  var x7 = function (v) { return v / 1.742; };
  var x8 = function (v) { return 1000 + v / 1.96; };

  // moving averages, left half then right half
  var mk = function (s) { return s.split(' ').map(function (p) { return p.split(',').map(Number); }); };
  pl(mk('12,1375 70,1378 146,1390 240,1397 380,1397 425,1403 490,1393 560,1385 600,1380 650,1350 720,1325 770,1280 820,1250 880,1210 940,1170 1110,1030 1170,982 1240,950 1310,925 1400,897 1490,868 1568,867 1742,843'), '#00e000', 2, x7, y7);
  pl(mk('0,1355 60,1345 143,1335 220,1310 370,1310 420,1327 470,1327 520,1318 570,1300 640,1288 672,1270 800,1258 820,1250 925,1240 1002,1215 1100,1190 1178,1165 1252,1150 1298,1127'), '#00e000', 2, x8, y8);
  pl(mk('45,1435 70,1420 100,1413 146,1400 190,1390 234,1375 280,1355 325,1340 370,1325 414,1320 459,1310 505,1303 550,1290 597,1268 640,1215 683,1155 725,1105 750,1060 772,1020 817,965 840,935 884,860 929,800 952,755 997,670 1018,620 1041,585 1065,565 1086,555 1130,525 1153,510 1175,483 1197,500 1242,525 1266,535 1310,555 1331,575 1355,585 1378,597 1399,625 1423,665 1445,705 1467,740 1490,765 1512,800 1535,840 1550,875 1568,905 1669,1030'), '#d800d8', 1.5, x7, y7);
  pl(mk('235,1525 270,1478 321,1440 370,1410 420,1405 446,1380 497,1330 522,1275 572,1205 622,1130 648,1085 672,1020 699,990 749,955 798,915 825,880 875,830 925,787 975,783 1025,790 1075,820 1126,840 1152,870 1178,915 1202,943 1252,983 1298,997'), '#d800d8', 1.5, x8, y8);
  pl(mk('12,1403 40,1385 70,1378 100,1378 146,1372 190,1355 234,1345 280,1335 325,1305 345,1292 370,1285 437,1280 482,1278 550,1276 575,1270 597,1250 620,1190 640,1120 660,1080 683,1010 705,960 728,920 750,850 772,745 795,690 817,655 840,642 862,640 885,620 907,625 929,623 952,585 975,582 997,572 1018,530 1041,510 1065,490 1085,470 1109,440 1130,410 1153,385 1175,380 1197,415 1221,445 1242,515 1266,570 1287,620 1310,650 1331,715 1355,765 1378,820 1399,880 1423,925 1445,952 1467,960 1490,970 1512,985 1535,1030'), '#d8d800', 1.4, x7, y7);
  pl(mk('170,1525 200,1480 245,1400 270,1345 296,1322 321,1300 346,1260 370,1253 396,1268 420,1287 446,1280 472,1250 497,1220 522,1200 546,1150 572,1090 597,1055 622,1010 648,900 672,775 699,713 723,700 749,690 772,677 798,673 825,670 850,655 875,650 899,730 925,810 949,850 975,860 1002,878 1025,900 1051,925 1075,975 1101,1005 1126,1027 1152,1022 1178,1017 1202,1037 1228,1062 1252,1080 1278,1077 1298,1073'), '#d8d800', 1.4, x8, y8);
  pl(mk('12,1385 40,1375 70,1355 100,1353 123,1362 170,1370 190,1358 234,1325 280,1287 300,1277 345,1258 370,1258 400,1275 437,1292 460,1303 482,1303 505,1277 548,1250 575,1225 600,1190 620,1080 640,980 660,900 680,810 705,740 728,735 750,680 772,602 795,592 840,543 862,615 885,635 929,680 952,630 975,550 997,510 1018,420 1041,352 1060,348 1085,372 1109,380 1130,415 1153,412 1175,407 1197,440 1221,550 1242,640 1266,700 1287,800 1310,850 1331,895 1355,910 1378,940 1399,955 1423,990 1445,1005 1467,1000 1490,995 1510,1015 1530,1030'), '#e4e4e4', 1.3, x7, y7);
  pl(mk('133,1525 170,1440 205,1340 220,1280 244,1250 270,1197 296,1207 321,1225 346,1240 370,1255 396,1345 420,1360 446,1325 472,1270 497,1190 522,1090 546,930 572,855 597,850 622,835 648,750 672,597 699,575 723,555 749,545 772,610 798,750 825,762 850,747 875,755 899,830 925,875 949,950 975,975 1002,1003 1025,975 1051,975 1075,995 1101,1035 1126,1053 1152,1070 1178,1063 1202,1075 1228,1090 1252,1108 1278,1078 1298,1073'), '#e4e4e4', 1.3, x8, y8);

  // erased watermark area over the lower part of the chart
  el('rect', { x: 540, y: 644, width: 1169, height: 151, fill: '#000' });
  el('line', { x1: 894, x2: 894, y1: 752, y2: 762, stroke: RED, 'stroke-width': 1.6 });

  // price marks
  el('polyline', { points: '1342,100 1350,99 1362,104', fill: 'none', stroke: '#909090', 'stroke-width': 1.5 });
  el('text', { x: 1365, y: 112, class: 'lb', fill: '#a8a8a8', 'font-size': 18, 'font-family': 'Liberation Sans' }, '14.76');
  el('rect', { x: 1361, y: 294, width: 349, height: 4, fill: '#808080' });
  el('text', { x: 1365, y: 288, fill: '#a8a8a8', 'font-size': 18, 'font-family': 'Liberation Sans' }, '13.00 - 12.95');
  el('text', { x: 102, y: 775, fill: '#808080', 'font-size': 17, 'font-family': 'Liberation Sans' }, '8.74');
  el('polyline', { points: '92,765 85,768 92,772', fill: 'none', stroke: '#808080' });
  [[1225, '#102860', '财'], [1330, '#a01818', '涨'], [1356, '#a05020', '榜']].forEach(function (t) {
    el('rect', { x: t[0] - 10, y: 777, width: 20, height: 20, fill: t[1] });
    el('text', { x: t[0], y: 793, 'text-anchor': 'middle', fill: '#e8e8e8', 'font-size': 16, 'font-family': 'Noto Sans CJK SC' }, t[2]);
  });

  // middle pane
  [['0.80', 885], ['0.60', 940], ['0.40', 996], ['0.20', 1051], ['1.00', 829]].forEach(function (a) {
    el('line', { x1: 1711, x2: 1720, y1: a[1], y2: a[1], stroke: DK, 'stroke-width': 1.5 });
    el('text', { x: 1779, y: a[1] + 7, 'text-anchor': 'end', fill: '#e82a2a', 'font-size': 18.6, 'font-family': 'Liberation Sans' }, a[0]);
  });
  el('polyline', { points: '7,1107 908,1107 919,828 932,1107 1663,1107', fill: 'none', stroke: '#e8e8e8', 'stroke-width': 1.8 });
  el('rect', { x: 1711, y: 826, width: 77, height: 21, fill: '#000088' });
  el('text', { x: 1714, y: 842, fill: '#c8c8d8', 'font-size': 17, 'font-family': 'Liberation Sans' }, '0.92');

  // bottom pane
  var yb = function (v) { return 1100 + v / 3; };
  el('line', { x1: 0, x2: 1711, y1: yb(222), y2: yb(222), stroke: DK, 'stroke-width': 1.5, 'stroke-dasharray': '2 4' });
  el('line', { x1: 1664, x2: 1711, y1: yb(375), y2: yb(375), stroke: DK, 'stroke-width': 1.5, 'stroke-dasharray': '2 4' });
  [['1.50', 222], ['0.00', 375]].forEach(function (a) {
    el('line', { x1: 1711, x2: 1720, y1: yb(a[1]), y2: yb(a[1]), stroke: DK, 'stroke-width': 1.5 });
    el('text', { x: 1779, y: yb(a[1]) + 7, 'text-anchor': 'end', fill: '#e82a2a', 'font-size': 18.6, 'font-family': 'Liberation Sans' }, a[0]);
  });
  var hist = [345,345,342,345,350,360,365,372,372,355,345,338,335,333,330,330,338,350,370,378,380,382,380,362,350,348,342,320,
    250,170,150,150,195,220,220,180,195,250,290,350,355,368,400,380,320,290,240,255,290,325,335,345,358,362,415,440,490,515,540,540,525,505,495,480,480,478,450,420,425,470,
    495,470,425,392,368,362,368,370,380,372,353,342,325,290,250,215,200,225,230,270,315,335,355,412,448,428,320,230,210,205,190,200,210,205,125,140,235,315,375,420,415,405,405,455,490,490,465,435,430,430,435,445,440,430,420,410,415,425,400,360];
  hist.forEach(function (v, i) {
    var x = cx(i) - 3.8, zero = yb(375), y = yb(v);
    if (v <= 375) el('rect', { x: x, y: y, width: 7.6, height: zero - y, fill: '#ff0000' });
    else el('rect', { x: x, y: zero, width: 7.6, height: y - zero, fill: '#00ff00' });
  });
  var stack = { 28: 2, 33: 3, 34: 3, 42: 3, 44: 3, 45: 3, 84: 2, 86: 3, 96: 3, 97: 4, 99: 4, 100: 4, 103: 4, 104: 4 };
  var bands = [['#0000f0', 320, 375], ['#00ffff', 270, 320], ['#ffff00', 220, 270], ['#00ff00', 170, 220]];
  Object.keys(stack).forEach(function (k) {
    for (var b = 0; b < stack[k]; b++) {
      el('rect', { x: cx(+k) - 3.8, y: yb(bands[b][1]), width: 7.6, height: yb(bands[b][2]) - yb(bands[b][1]), fill: bands[b][0] });
    }
  });
  el('line', { x1: 0, x2: 1664, y1: yb(375), y2: yb(375), stroke: '#e8e8e8', 'stroke-width': 1.8 });
  var gp = hist.map(function (v, i) { return [cx(i), yb(v)]; });
  var mp = hist.map(function (v, i) {
    var prev = i ? hist[i - 1] : v, next = i < hist.length - 1 ? hist[i + 1] : v;
    return [cx(i) + 1, yb(prev * 0.55 + v * 0.35 + next * 0.1 + 3)];
  });
  var idn = function (v) { return v; };
  pl(gp, '#00d000', 1.5, idn, idn);
  pl(mp, '#ff20ff', 1.5, idn, idn);

  function arrow(x, y1, y2, up) {
    var col = up ? '#ff0000' : '#00c800';
    el('line', { x1: x, x2: x, y1: up ? y1 + 6 : y1, y2: up ? y2 : y2 - 6, stroke: col, 'stroke-width': 1.7 });
    var tipY = up ? y1 : y2, baseY = up ? y1 + 10 : y2 - 10;
    el('polygon', { points: (x - 7) + ',' + baseY + ' ' + (x + 7) + ',' + baseY + ' ' + x + ',' + tipY, fill: col });
  }
  [[26,355,410],[188,377,427],[300,338,392],[457,385,440],[750,225,280],[952,378,432],[1173,365,422]].forEach(function (a) { arrow(x7(a[0]), yb(a[1]), yb(a[2]), true); });
  [[75,345,405],[280,340,395],[345,335,392],[703,175,225],[795,195,250],[1041,255,310],[1197,375,440],[1510,425,480]].forEach(function (a) { arrow(x7(a[0]), yb(a[1]), yb(a[2]), false); });
  var x10 = function (v) { return 900 + v / 1.742; };
  [[31,470,527],[211,378,432],[569,425,480],[749,210,265],[907,422,477],[1016,490,545],[1173,445,498],[1308,400,455]].forEach(function (a) { arrow(x10(a[0]), yb(a[1]), yb(a[2]), true); });
  [[143,375,427],[389,215,270],[703,190,242],[794,145,197],[951,410,463],[1108,438,490],[1265,422,477]].forEach(function (a) { arrow(x10(a[0]), yb(a[1]), yb(a[2]), false); });
  el('rect', { x: 1659, y: 1220, width: 7, height: 5, fill: '#ff0000' });

  // ticks on the top edge of the time axis
  [361,423,484,596,824,899,972,1108,1169,1229,1290,1352,1414,1473,1535,1597,1660].forEach(function (x) {
    el('line', { x1: x, x2: x, y1: 1281, y2: 1283, stroke: DK, 'stroke-width': 1.5 });
  });
})();
```
